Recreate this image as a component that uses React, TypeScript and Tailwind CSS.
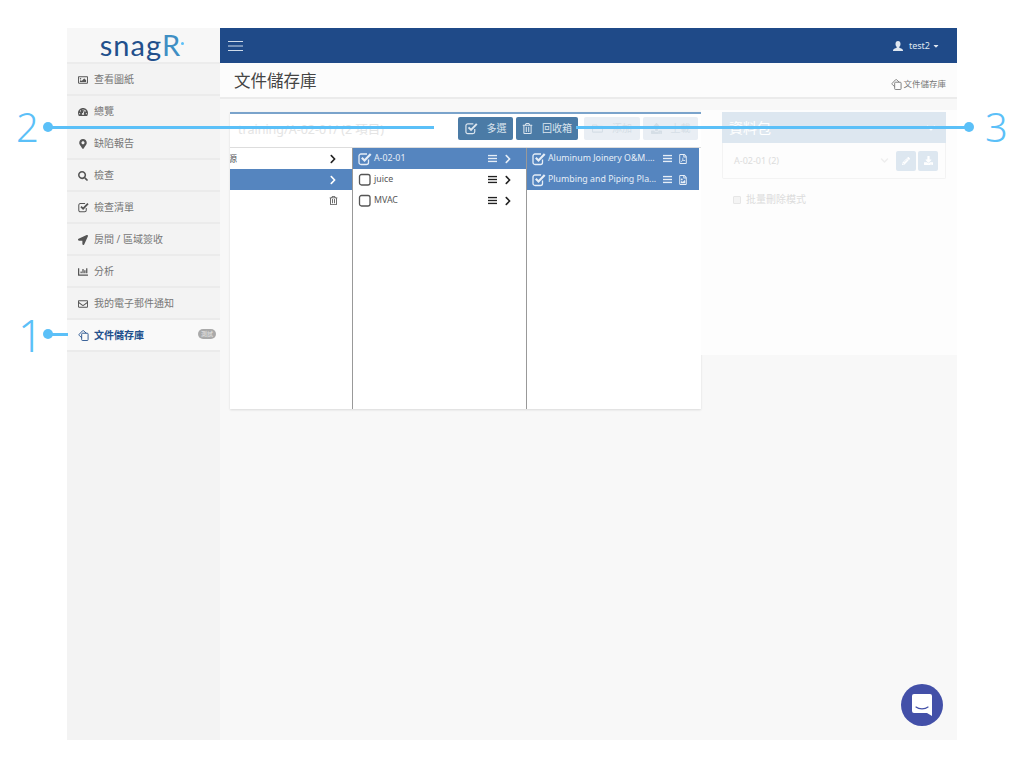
import type { ReactNode } from "react";
import {
  FaCaretDown,
  FaChartBar,
  FaChevronDown,
  FaChevronRight,
  FaDownload,
  FaLocationArrow,
  FaMapMarkerAlt,
  FaPencilAlt,
  FaRegEnvelope,
  FaRegFileImage,
  FaRegFilePdf,
  FaRegFolder,
  FaRegImage,
  FaRegTrashAlt,
  FaSearch,
  FaTachometerAlt,
  FaUpload,
} from "react-icons/fa";

function CheckIcon({ size = 14 }: { size?: number }) {
  return (
    <svg width={size} height={size} viewBox="0 0 14 14" fill="none">
      <path
        d="M10.5 7.5v3a2 2 0 0 1-2 2h-5.500a2 2 0 0 1-2-2v-6.500a2 2 0 0 1 2-2h6"
        stroke="currentColor"
        strokeWidth="1.300"
      />
      <path
        d="M3.800 5.800l2.700 2.700 6.200-6.500"
        stroke="currentColor"
        strokeWidth="2.200"
      />
    </svg>
  );
}

function BoxIcon() {
  return (
    <svg width="14" height="14" viewBox="0 0 14 14" fill="none">
      <rect
        x="1.500"
        y="1.500"
        width="10.500"
        height="10.500"
        rx="2"
        stroke="currentColor"
        strokeWidth="1.300"
      />
    </svg>
  );
}

function DocsIcon() {
  return (
    <svg width="11" height="11" viewBox="0 0 12 12" fill="none" stroke="currentColor">
      <path d="M5 3.500h5a1 1 0 0 1 1 1v6a1 1 0 0 1-1 1h-5a1 1 0 0 1-1-1v-6a1 1 0 0 1 1-1z" />
      <path d="M4 8.500l-2.700-2.700a.8.8 0 0 1 0-1.100l3.700-3.900a.8.8 0 0 1 1.100 0l2.900 2.700" />
    </svg>
  );
}

function BarsIcon({ size = 9 }: { size?: number }) {
  return (
    <svg width={size} height={size} viewBox="0 0 10 10" fill="currentColor">
      <rect y="1" width="10" height="1.500" />
      <rect y="4.250" width="10" height="1.500" />
      <rect y="7.500" width="10" height="1.500" />
    </svg>
  );
}

const menu = [
  { label: "查看圖紙", icon: <FaRegImage /> },
  { label: "總覽", icon: <FaTachometerAlt /> },
  { label: "缺陷報告", icon: <FaMapMarkerAlt /> },
  { label: "檢查", icon: <FaSearch /> },
  { label: "檢查清單", icon: <CheckIcon size={11} /> },
  { label: "房間 / 區域簽收", icon: <FaLocationArrow /> },
  { label: "分析", icon: <FaChartBar /> },
  { label: "我的電子郵件通知", icon: <FaRegEnvelope /> },
];

function Sidebar() {
  return (
    <aside className="w-[153px] shrink-0 bg-[#f3f3f3]">
      <div className="flex h-[36px] items-center justify-center border-b-2 border-[#ececec] bg-[#f7f7f7] pb-[2px] pr-[3px] font-['Lato',sans-serif] text-[29px] leading-none tracking-[1px] text-[#22508c]">
        snag<span className="text-[#3f8fc4]">R</span>
        <span className="mb-[2px] h-[3px] w-[3px] rounded-full bg-[#5bc0f8]" />
      </div>
      {menu.map((m) => (
        <div
          key={m.label}
          className="flex h-[32px] items-center border-b-2 border-[#ebebeb] pl-[10px] pt-[1px] text-[10px] text-[#777]"
        >
          <span className="flex w-[12px] justify-center text-[10px] text-[#555]">
            {m.icon}
          </span>
          <span className="ml-[5px]">{m.label}</span>
        </div>
      ))}
      <div className="flex h-[32px] items-center border-b-2 border-[#ebebeb] bg-[#f9f9f9] pl-[10px] pt-[1px] text-[10px] font-bold text-[#22508c]">
        <span className="flex w-[12px] justify-center">
          <DocsIcon />
        </span>
        <span className="ml-[5px]">文件儲存庫</span>
        <span className="mb-[3px] ml-auto mr-[4px] rounded-full bg-[#aaa] px-[3px] text-[6px] font-normal leading-[10px] text-[#e8e8e8]">
          測試
        </span>
      </div>
    </aside>
  );
}

function ActionButton({
  icon,
  label,
  width,
  faded,
}: {
  icon: ReactNode;
  label: string;
  width: string;
  faded?: boolean;
}) {
  return (
    <div
      className={`flex h-[23px] items-center justify-center gap-[9px] rounded-[2px] text-[10px] ${width} ${
        faded ? "bg-[#e9eef4] text-[#d5dee6]" : "bg-[#4b7ba6] text-[#dce6ef]"
      }`}
    >
      <span className="text-[11px]">{icon}</span>
      {label}
    </div>
  );
}

function FileRow({
  label,
  checked,
  selected,
  icon,
  chevron,
}: {
  label: string;
  checked?: boolean;
  selected?: boolean;
  icon?: ReactNode;
  chevron?: boolean;
}) {
  return (
    <div
      className={`flex h-[21px] items-center pl-[5px] text-[8.8px] ${
        selected ? "bg-[#5585bf] text-[#e6eef7]" : "text-[#555]"
      }`}
    >
      <span className="shrink-0">{checked ? <CheckIcon /> : <BoxIcon />}</span>
      <span className="ml-[2px] mt-[1px] whitespace-nowrap">{label}</span>
      <span className={`ml-auto ${selected ? "" : "text-[#222]"}`}>
        <BarsIcon />
      </span>
      {chevron ? (
        <span
          className={`ml-[6px] mr-[13px] text-[10px] ${selected ? "" : "text-[#222]"}`}
        >
          <FaChevronRight />
        </span>
      ) : (
        <span className="ml-[6px] mr-[11px] text-[10px]">{icon}</span>
      )}
    </div>
  );
}

function Repository() {
  return (
    <div className="h-[297px] w-[471px] shrink-0 border-t-2 border-[#7aa3cb] bg-white shadow-[0_1px_2px_rgba(0,0,0,0.12)]">
      <div className="flex h-[34px] items-start border-b border-[#ddd] pl-[8px] pr-[3px] pt-[3px]">
        <span className="-mt-[1px] text-[12.5px] leading-[28px] text-[#e4e4e4]">
          training/A-02-01/ (2 項目)
        </span>
        <div className="ml-auto flex gap-[3px]">
          <ActionButton icon={<CheckIcon size={13} />} label="多選" width="w-[55px]" />
          <ActionButton icon={<FaRegTrashAlt />} label="回收箱" width="w-[62px]" />
          <div className="w-0" />
          <ActionButton icon={<FaRegFolder />} label="添加" width="w-[56px]" faded />
          <ActionButton icon={<FaUpload />} label="上載" width="w-[55px]" faded />
        </div>
      </div>
      <div className="flex h-[261px]">
        <div className="w-[123px] shrink-0 overflow-hidden border-r border-[#999] text-[9px] text-[#555]">
          <div className="flex h-[21px] items-center justify-between pr-[14px]">
            <span className="-ml-[2px]">源</span>
            <span className="text-[10px] text-[#222]">
              <FaChevronRight />
            </span>
          </div>
          <div className="flex h-[21px] items-center justify-end bg-[#5585bf] pr-[14px] text-[10px] text-white">
            <FaChevronRight />
          </div>
          <div className="flex h-[21px] items-center justify-end pr-[14px] text-[9px] text-[#555]">
            <FaRegTrashAlt />
          </div>
        </div>
        <div className="w-[174px] shrink-0 border-r border-[#999]">
          <FileRow label="A-02-01" checked selected chevron />
          <FileRow label="juice" chevron />
          <FileRow label="MVAC" chevron />
        </div>
        <div className="w-[172px] shrink-0">
          <FileRow
            label="Aluminum Joinery O&M...."
            checked
            selected
            icon={<FaRegFilePdf />}
          />
          <FileRow
            label="Plumbing and Piping Pla..."
            checked
            selected
            icon={<FaRegFileImage />}
          />
        </div>
      </div>
    </div>
  );
}

function PackagePanel() {
  return (
    <div className="-mt-[2px] h-[245px] grow bg-[#fdfdfd] pl-[21px] pr-[11px] pt-[2px]">
      <div className="flex h-[31px] items-center justify-between bg-[#dde7f0] pl-[7px] pr-[10px] text-[14px] text-white">
        資料包
        <span className="text-[10px]">
          <FaChevronDown />
        </span>
      </div>
      <div className="flex h-[36px] items-center rounded-b-[2px] border border-t-0 border-[#f3f3f3] pl-[11px] pr-[7px] text-[9px] text-[#dcdcdc]">
        A-02-01 (2)
        <span className="ml-auto text-[9px] text-[#eeeeee]">
          <FaChevronDown />
        </span>
        <span className="ml-[7px] flex h-[20px] w-[20px] items-center justify-center rounded-[2px] bg-[#dde7f0] text-[8px] text-white">
          <FaPencilAlt />
        </span>
        <span className="ml-[2px] flex h-[20px] w-[20px] items-center justify-center rounded-[2px] bg-[#dde7f0] text-[9px] text-white">
          <FaDownload />
        </span>
      </div>
      <div className="ml-[11px] mt-[13px] flex items-center gap-[5px] text-[10px] text-[#dcdcdc]">
        <span className="h-[8px] w-[8px] rounded-[1px] border border-[#e6e6e6] bg-[#f4f4f4]" />
        批量刪除模式
      </div>
    </div>
  );
}

function Callout({ className }: { className: string }) {
  return <div className={`absolute bg-[#5bc0f8] ${className}`} />;
}

export default function App() {
  return (
    <div className="relative h-[768px] w-[1024px] overflow-hidden bg-white pl-[67px] pt-[28px] font-['Noto_Sans','Noto_Sans_CJK_TC',sans-serif]">
      <div className="flex h-[712px] w-[890px]">
        <Sidebar />
        <main className="relative grow bg-[#f8f8f8]">
          <header className="flex h-[35px] items-center justify-between bg-[#1f4a88] pl-[8px] pr-[17px] text-white">
            <svg width="15" height="12" viewBox="0 0 15 12" fill="#cfdbe9">
              <rect y="1" width="15" height="1" />
              <rect y="5.500" width="15" height="1" />
              <rect y="10" width="15" height="1" />
            </svg>
            <div className="flex items-center text-[9px] text-[#dfe7f0]">
              <svg
                className="mr-[6px]"
                width="10"
                height="10"
                viewBox="0 0 10 10"
                fill="currentColor"
              >
                <path d="M5 0c-1.600 0-2.500 1.200-2.500 3 0 1.200.5 2.300 1.200 2.900v.8C2 7.300 0 8 0 9.500V10h10v-.5c0-1.500-2-2.200-3.700-2.800v-.8C7 5.300 7.500 4.200 7.500 3 7.500 1.200 6.600 0 5 0z" />
              </svg>
              test2
              <span className="ml-[2px] text-[8px]">
                <FaCaretDown />
              </span>
            </div>
          </header>
          <div className="flex h-[36px] items-center justify-between border-b-2 border-[#ebebeb] bg-[#fcfcfc] pl-[14px] pr-[11px]">
            <h1 className="mt-[3px] text-[16.500px] text-[#444]">文件儲存庫</h1>
            <div className="mt-[8px] flex items-center gap-[1px] text-[8.500px] text-[#777]">
              <DocsIcon />
              文件儲存庫
            </div>
          </div>
          <div className="flex items-start pl-[10px] pt-[13px]">
            <Repository />
            <PackagePanel />
          </div>
          <div className="absolute bottom-[14px] right-[14px] flex h-[42px] w-[42px] items-center justify-center rounded-full bg-[#4350a8]">
            <svg width="22" height="24" viewBox="0 0 22 24">
              <path
                d="M3 1h16a2 2 0 0 1 2 2v20l-5-3H3a2 2 0 0 1-2-2V3a2 2 0 0 1 2-2z"
                fill="#fff"
              />
              <path
                d="M5 14c3 2.400 9 2.400 12 0"
                fill="none"
                stroke="#4350a8"
                strokeWidth="1.200"
                strokeLinecap="round"
              />
            </svg>
          </div>
        </main>
      </div>

      {/* tutorial callouts drawn over the screenshot */}
      <span className="absolute left-[18px] top-[309px] text-[44px] font-light leading-[52px] text-[#5bc0f8]">
        1
      </span>
      <Callout className="left-[43px] top-[329px] h-[10px] w-[10px] rounded-full" />
      <Callout className="left-[50px] top-[333px] h-[3px] w-[18px]" />
      <span className="absolute left-[16px] top-[101px] text-[40px] font-light leading-[52px] text-[#5bc0f8]">
        2
      </span>
      <Callout className="left-[43px] top-[122px] h-[10px] w-[10px] rounded-full" />
      <Callout className="left-[50px] top-[126px] h-[3px] w-[384px]" />
      <Callout className="left-[576px] top-[126px] h-[3px] w-[392px]" />
      <Callout className="left-[964px] top-[122px] h-[10px] w-[10px] rounded-full" />
      <span className="absolute left-[985px] top-[101px] text-[40px] font-light leading-[52px] text-[#5bc0f8]">
        3
      </span>
    </div>
  );
}
